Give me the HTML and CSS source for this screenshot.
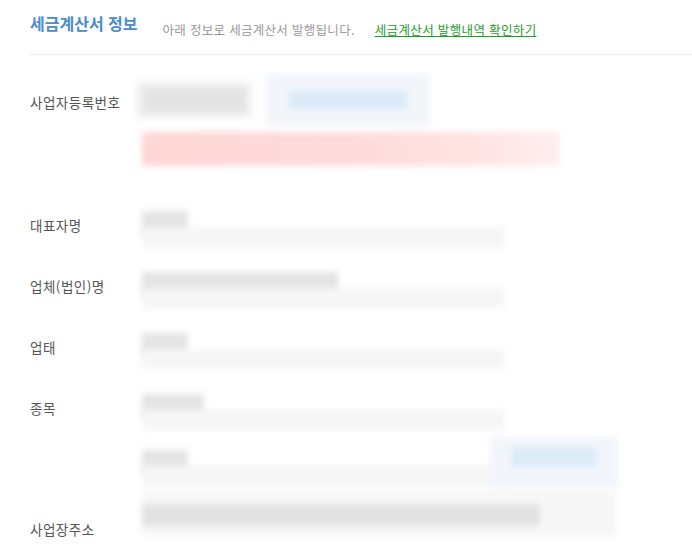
FILE: index.html
```html
<!DOCTYPE html>
<html lang="ko">
<head>
	<meta charset="UTF-8">
	<meta name="viewport" content="width=device-width, initial-scale=1.0">
	<title>세금계산서 정보</title>
	<link rel="stylesheet" href="styles.css">
</head>
<body>
	<div class="section">
		<div class="section-head">
			<h2 class="section-title">세금계산서 정보</h2>
			<span class="section-desc">아래 정보로 세금계산서 발행됩니다.</span>
			<a class="section-link" href="#">세금계산서 발행내역 확인하기</a>
		</div>

		<div class="form-row row-bizno">
			<div class="label">사업자등록번호</div>
			<div class="field">
				<div class="line">
					<div class="blur-text w-num"></div>
					<div class="blur-btn btn-check"><span class="blur-btn-text"></span></div>
				</div>
				<div class="blur-error"></div>
			</div>
		</div>

		<div class="form-row">
			<div class="label">대표자명</div>
			<div class="field">
				<div class="blur-text w-short"></div>
				<div class="blur-input"></div>
			</div>
		</div>

		<div class="form-row">
			<div class="label">업체(법인)명</div>
			<div class="field">
				<div class="blur-text w-long"></div>
				<div class="blur-input"></div>
			</div>
		</div>

		<div class="form-row">
			<div class="label">업태</div>
			<div class="field">
				<div class="blur-text w-short"></div>
				<div class="blur-input"></div>
			</div>
		</div>

		<div class="form-row">
			<div class="label">종목</div>
			<div class="field">
				<div class="blur-text w-mid"></div>
				<div class="blur-input"></div>
			</div>
		</div>

		<div class="form-row row-addr">
			<div class="label">사업장주소</div>
			<div class="field">
				<div class="line addr-top">
					<div class="zip">
						<div class="blur-text w-short"></div>
						<div class="blur-input"></div>
					</div>
					<div class="blur-btn btn-zip"><span class="blur-btn-text"></span></div>
				</div>
				<div class="addr-line">
					<div class="blur-text w-addr"></div>
				</div>
			</div>
		</div>
	</div>
</body>
</html>
```

FILE: styles.css
```css
body {
	margin: 0;
	background: #fff;
	font-family: "Noto Sans CJK KR", "Noto Sans", sans-serif;
	overflow: hidden;
}
.section {
	padding-left: 30px;
}
.section-head {
	display: flex;
	align-items: baseline;
	height: 55px;
	border-bottom: 1px solid #ececec;
	box-sizing: border-box;
	padding-top: 11px;
}
.section-title {
	margin: 0;
	font-size: 16px;
	font-weight: bold;
	color: #4a8ccc;
}
.section-desc {
	margin-left: 25px;
	font-size: 12.5px;
	color: #999;
	letter-spacing: 0.3px;
	position: relative;
	top: 5px;
}
.section-link {
	margin-left: 20px;
	font-size: 12.5px;
	color: #1e9e2a;
	text-decoration: underline;
	letter-spacing: 0.35px;
	position: relative;
	top: 5px;
}

.form-row {
	display: grid;
	grid-template-columns: 112px 1fr;
	height: 61px;
}
.row-bizno {
	height: 141px;
}
.row-addr {
	height: 108px;
}
.label {
	padding-top: 19px;
	font-size: 13.5px;
	line-height: 20px;
	color: #555;
	letter-spacing: 0.5px;
}
.row-bizno .label {
	padding-top: 37px;
}
.row-addr .label {
	padding-top: 79px;
}

/* blurred (masked) field content */
.line {
	display: flex;
	align-items: flex-start;
}
.blur-text {
	height: 24px;
	background: #e4e4e4;
	filter: blur(3px);
	margin-top: 15px;
}
.blur-input {
	width: 363px;
	height: 20px;
	background: #f6f6f6;
	filter: blur(3px);
	margin-top: -8px;
}
.w-short { width: 46px; }
.w-mid { width: 62px; }
.w-long { width: 196px; }
.w-num {
	width: 104px;
	margin-top: 32px;
	height: 26px;
	box-shadow: 0 0 0 6px #f3f3f3;
}
.blur-btn {
	background: #f2f6fb;
	filter: blur(3px);
	display: flex;
	align-items: center;
	justify-content: center;
}
.blur-btn-text {
	display: block;
	background: #dcebf8;
	height: 20px;
}
.btn-check {
	width: 164px;
	height: 52px;
	margin-top: 19px;
	margin-left: 20px;
}
.btn-check .blur-btn-text {
	width: 118px;
}
.blur-error {
	width: 418px;
	height: 34px;
	margin-top: 6px;
	background: linear-gradient(90deg, #ffd6d6 0%, #ffdcdc 55%, #ffe3e3 80%, #ffeeee 100%);
	filter: blur(3px);
}
.addr-top {
	height: 50px;
}
.zip {
	width: 348px;
}
.zip .blur-text {
	margin-top: 10px;
}
.btn-zip {
	width: 128px;
	height: 52px;
	margin-top: -3px;
}
.btn-zip .blur-btn-text {
	width: 86px;
	margin-bottom: 12px;
}
.addr-line {
	width: 475px;
	height: 46px;
	background: #f7f7f7;
	filter: blur(3px);
	padding-top: 14px;
	box-sizing: border-box;
}
.addr-line .blur-text {
	margin-top: 0;
	height: 22px;
	background: #e2e2e2;
	filter: none;
}
.w-addr { width: 398px; }
```
